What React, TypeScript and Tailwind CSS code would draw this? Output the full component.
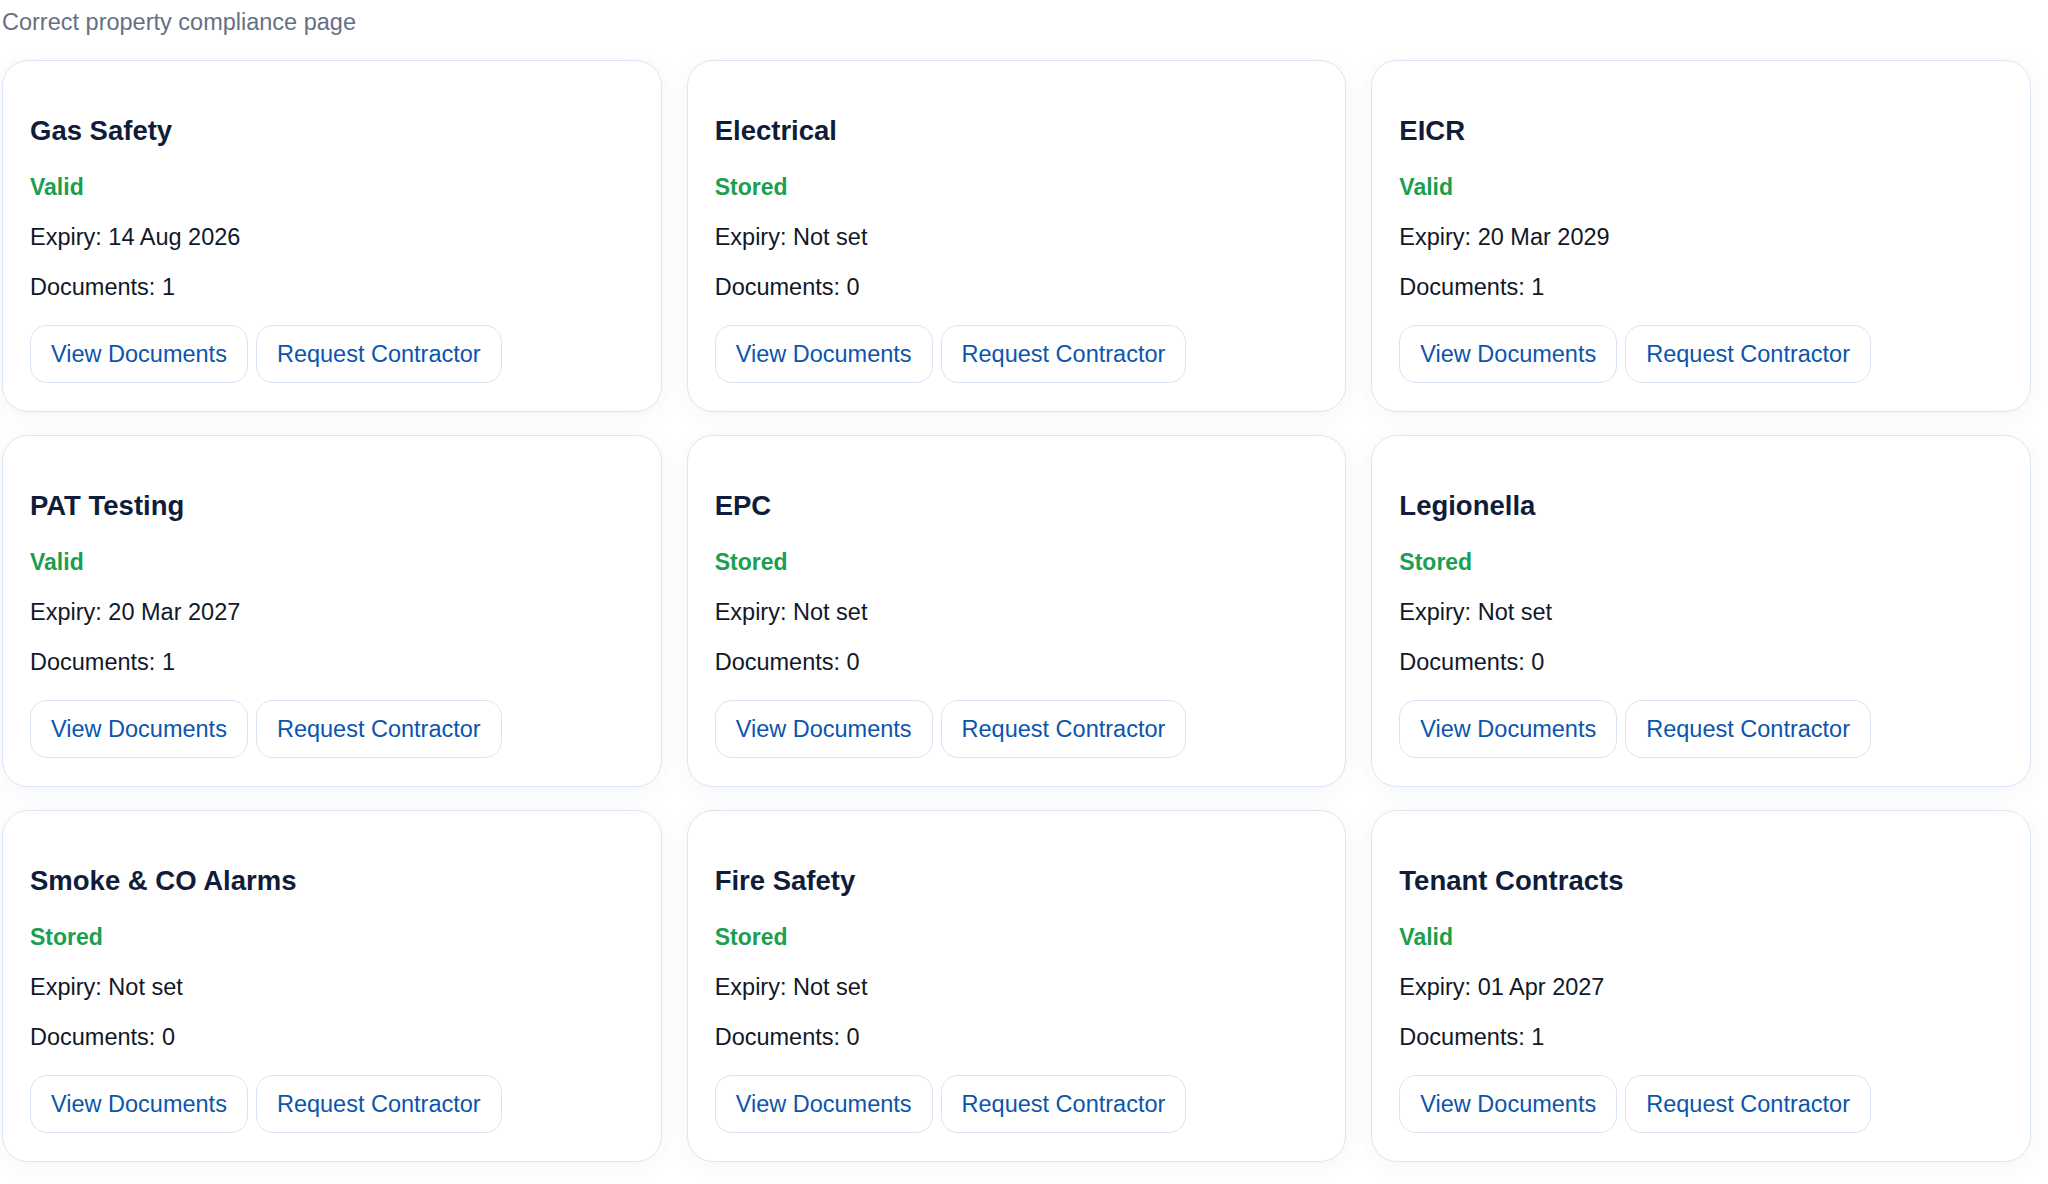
const items = [
  { name: "Gas Safety", status: "Valid", expiry: "14 Aug 2026", docs: 1 },
  { name: "Electrical", status: "Stored", expiry: "Not set", docs: 0 },
  { name: "EICR", status: "Valid", expiry: "20 Mar 2029", docs: 1 },
  { name: "PAT Testing", status: "Valid", expiry: "20 Mar 2027", docs: 1 },
  { name: "EPC", status: "Stored", expiry: "Not set", docs: 0 },
  { name: "Legionella", status: "Stored", expiry: "Not set", docs: 0 },
  { name: "Smoke & CO Alarms", status: "Stored", expiry: "Not set", docs: 0 },
  { name: "Fire Safety", status: "Stored", expiry: "Not set", docs: 0 },
  { name: "Tenant Contracts", status: "Valid", expiry: "01 Apr 2027", docs: 1 },
];

function ComplianceCard({ item }: { item: (typeof items)[number] }) {
  return (
    <div className="flex flex-col items-start rounded-[26px] border border-[#dbe6f5] bg-white px-[27px] pt-[54px] pb-[28px] shadow-[0_4px_22px_rgba(30,58,110,0.05)]">
      <h3 className="text-[27.5px] font-bold leading-[31px] text-[#0f1d3a]">{item.name}</h3>
      <p className="mt-[28px] text-[23px] font-bold leading-[26px] text-[#1c9e4f]">{item.status}</p>
      <p className="mt-[24px] text-[23.5px] leading-[26px] text-[#111827]">Expiry: {item.expiry}</p>
      <p className="mt-[24px] text-[23.5px] leading-[26px] text-[#111827]">Documents: {item.docs}</p>
      <div className="mt-[25px] flex gap-[8px]">
        <button className="rounded-[17px] border border-[#d8e4f4] bg-white px-[20px] py-[15px] text-[23.5px] leading-[26px] text-[#0b55ad]">
          View Documents
        </button>
        <button className="rounded-[17px] border border-[#d8e4f4] bg-white px-[20px] py-[15px] text-[23.5px] leading-[26px] text-[#0b55ad]">
          Request Contractor
        </button>
      </div>
    </div>
  );
}

export default function App() {
  return (
    <div className="min-h-screen bg-white font-['Liberation_Sans',Arial,sans-serif]">
      <div className="w-[2031px] pl-[2px] pt-[9px]">
        <p className="text-[23.5px] leading-[26px] text-[#667085]">Correct property compliance page</p>
        <div className="mt-[25px] grid grid-cols-3 gap-x-[25px] gap-y-[23px]">
          {items.map((item) => (
            <ComplianceCard key={item.name} item={item} />
          ))}
        </div>
      </div>
    </div>
  );
}
